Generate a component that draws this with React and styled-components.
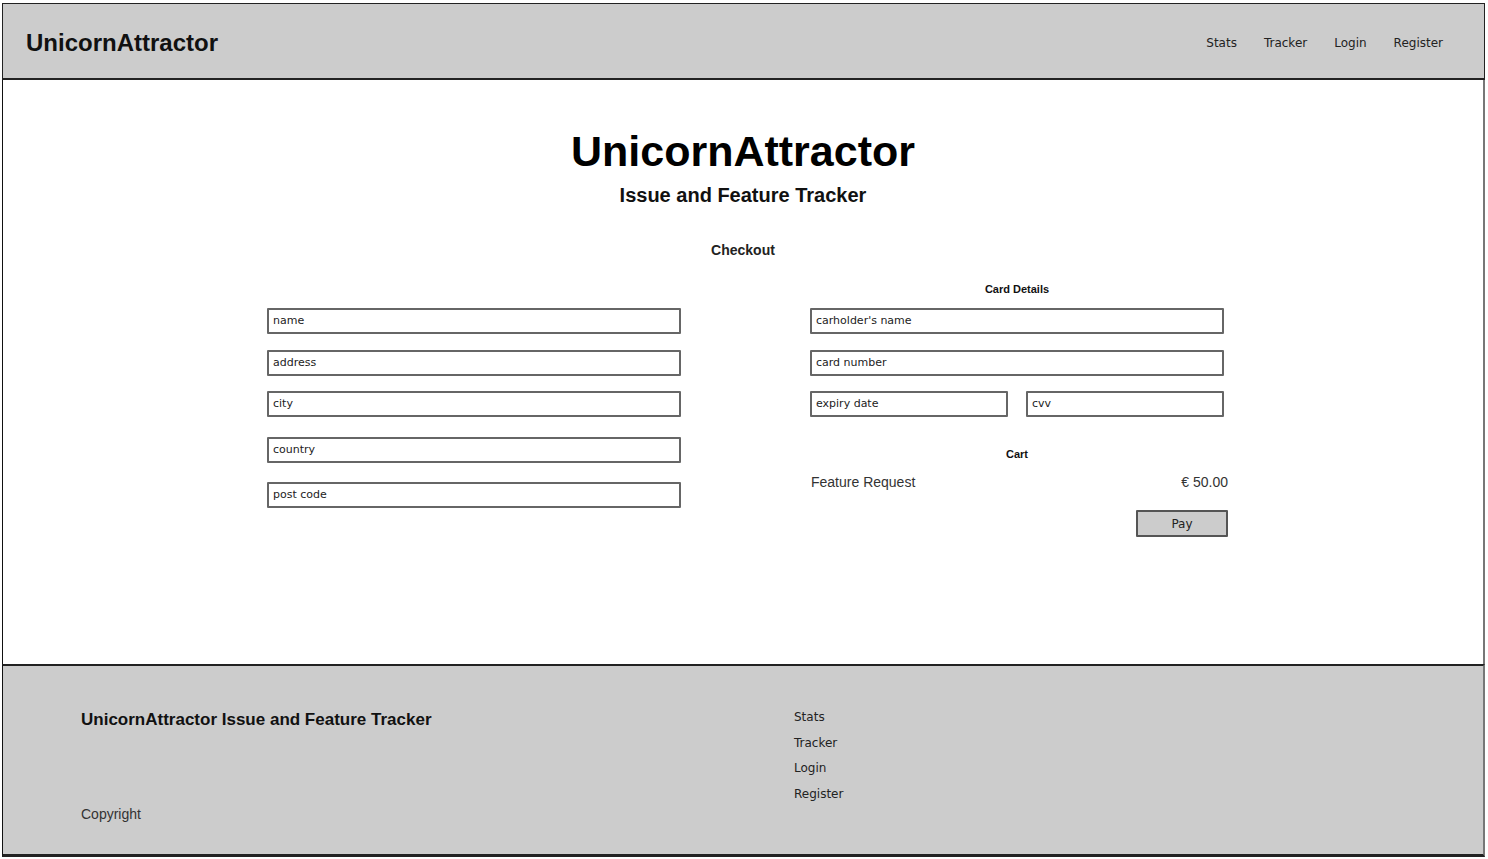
import styled, { createGlobalStyle } from "styled-components";

const GlobalStyle = createGlobalStyle`
  html, body {
    margin: 0;
    padding: 0;
    background: #ffffff;
  }
  body {
    font-family: "Liberation Sans", Arial, sans-serif;
    color: #000;
  }
  * {
    box-sizing: border-box;
  }
`;

const sketch = `"DejaVu Sans", "Noto Sans", sans-serif`;

const Frame = styled.div`
  width: 1483px;
  margin: 3px 0 0 2px;
  display: flex;
  flex-direction: column;
`;

/* Header */
const Header = styled.header`
  height: 77px;
  background-color: #cccccc;
  border: 1px solid #222;
  border-bottom-width: 2px;
  display: flex;
  align-items: center;
  justify-content: space-between;
  padding: 4px 41px 0 23px;
`;

const Brand = styled.div`
  font-size: 24px;
  font-weight: 700;
  color: #111;
  padding-bottom: 1px;
`;

const Nav = styled.nav`
  display: flex;
  align-items: center;
  gap: 27px;
`;

const NavLink = styled.a`
  font-family: ${sketch};
  font-size: 12px;
  color: #222;
  text-decoration: none;
`;

/* Main */
const Main = styled.main`
  height: 584px;
  border-left: 1px solid #111;
  border-right: 2px solid #777;
  padding-top: 46px;
  display: flex;
  flex-direction: column;
  align-items: center;
`;

const Title = styled.h1`
  margin: 0;
  font-size: 43px;
  line-height: 50px;
  font-weight: 700;
  color: #000;
`;

const Subtitle = styled.h2`
  margin: 7px 0 0;
  font-size: 20px;
  line-height: 24px;
  font-weight: 700;
  color: #111;
`;

const SectionTitle = styled.h3`
  margin: 34px 0 0;
  font-size: 14px;
  line-height: 18px;
  font-weight: 700;
  color: #222;
`;

const FormGrid = styled.div`
  margin-top: 24px;
  margin-left: 9px;
  display: flex;
  gap: 129px;
`;

const Column = styled.div`
  width: ${(props) => props.$width}px;
  display: flex;
  flex-direction: column;
  padding-top: ${(props) => props.$top || 0}px;
`;

const SmallTitle = styled.h4`
  width: 414px;
  margin: ${(props) => props.$mt || 0}px 0 13px;
  font-size: 11px;
  line-height: 12px;
  font-weight: 700;
  text-align: center;
  color: #111;
`;

const Field = styled.input`
  width: ${(props) => props.$width || 414}px;
  height: 26px;
  margin-top: ${(props) => props.$mt || 0}px;
  border: 2px solid #666;
  border-radius: 1px;
  background: #fff;
  padding: 0 4px 2px;
  font-family: ${sketch};
  font-size: 11px;
  color: #222;
  outline: none;

  &::placeholder {
    color: #222;
    opacity: 1;
  }
`;

const FieldRow = styled.div`
  display: flex;
  gap: 18px;
  margin-top: 15px;
`;

const CartRow = styled.div`
  display: flex;
  justify-content: space-between;
  padding-left: 1px;
  font-size: 14px;
  line-height: 18px;
  color: #333;
`;

const PayButton = styled.button`
  align-self: flex-end;
  margin-top: 19px;
  width: 92px;
  height: 27px;
  background-color: #cccccc;
  border: 2px solid #555;
  border-radius: 1px;
  font-family: ${sketch};
  font-size: 12px;
  color: #222;
  cursor: pointer;
`;

/* Footer */
const Footer = styled.footer`
  height: 193px;
  background-color: #cccccc;
  border-top: 2px solid #222;
  border-left: 1px solid #111;
  border-right: 2px solid #777;
  border-bottom: 3px solid #222;
  display: grid;
  grid-template-columns: 713px 1fr;
  padding: 42px 0 0 78px;
`;

const FooterInfo = styled.div`
  display: flex;
  flex-direction: column;
  padding-top: 2px;
`;

const FooterTitle = styled.div`
  font-size: 17px;
  line-height: 20px;
  font-weight: 700;
  color: #111;
`;

const Copyright = styled.div`
  margin-top: 75px;
  font-size: 14px;
  line-height: 18px;
  color: #333;
`;

const FooterLinks = styled.div`
  display: flex;
  flex-direction: column;
  gap: 7.7px;
`;

const FooterLink = styled.a`
  font-family: ${sketch};
  font-size: 12px;
  line-height: 18px;
  color: #222;
  text-decoration: none;
`;

const links = ["Stats", "Tracker", "Login", "Register"];

export default function App() {
  return (
    <>
      <GlobalStyle />
      <Frame>
        <Header>
          <Brand>UnicornAttractor</Brand>
          <Nav>
            {links.map((l) => (
              <NavLink key={l}>{l}</NavLink>
            ))}
          </Nav>
        </Header>

        <Main>
          <Title>UnicornAttractor</Title>
          <Subtitle>Issue and Feature Tracker</Subtitle>
          <SectionTitle>Checkout</SectionTitle>

          <FormGrid>
            <Column $width={414} $top={25}>
              <Field placeholder="name" />
              <Field placeholder="address" $mt={16} />
              <Field placeholder="city" $mt={15} />
              <Field placeholder="country" $mt={20} />
              <Field placeholder="post code" $mt={19} />
            </Column>

            <Column $width={418}>
              <SmallTitle>Card Details</SmallTitle>
              <Field placeholder="carholder's name" />
              <Field placeholder="card number" $mt={16} />
              <FieldRow>
                <Field placeholder="expiry date" $width={198} />
                <Field placeholder="cvv" $width={198} />
              </FieldRow>
              <SmallTitle $mt={31}>Cart</SmallTitle>
              <CartRow>
                <span>Feature Request</span>
                <span>€ 50.00</span>
              </CartRow>
              <PayButton>Pay</PayButton>
            </Column>
          </FormGrid>
        </Main>

        <Footer>
          <FooterInfo>
            <FooterTitle>UnicornAttractor Issue and Feature Tracker</FooterTitle>
            <Copyright>Copyright</Copyright>
          </FooterInfo>
          <FooterLinks>
            {links.map((l) => (
              <FooterLink key={l}>{l}</FooterLink>
            ))}
          </FooterLinks>
        </Footer>
      </Frame>
    </>
  );
}
